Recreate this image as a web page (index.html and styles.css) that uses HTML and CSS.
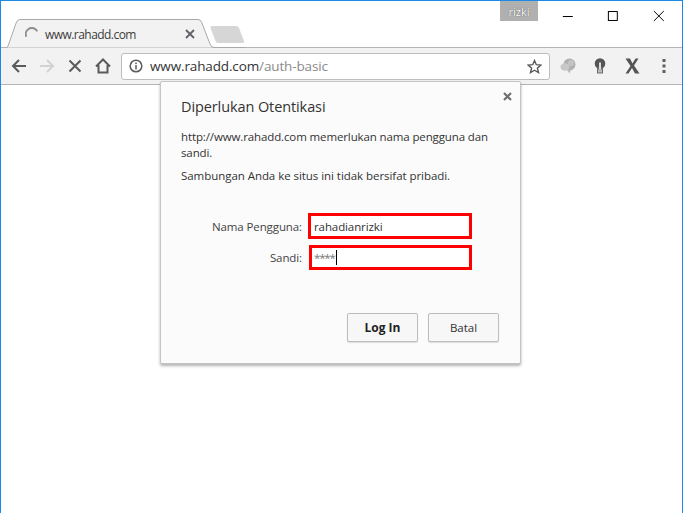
FILE: index.html
```html
<!DOCTYPE html>
<html lang="id">
<head>
<meta charset="utf-8">
<title>www.rahadd.com</title>
<link rel="stylesheet" href="styles.css">
</head>
<body>
<div class="window">
  <header class="titlebar">
    <div class="tab-shape-wrap">
      <svg class="tab-shape" width="240" height="31" viewBox="0 0 240 31">
        <path d="M0 28.500H.5Q1.500 28.500 2 27L10.500 3Q11.500 .5 14 .5H192Q194.500 .5 195.500 3L204 25Q205.500 28.500 208 28.500H240" fill="#f2f2f2" stroke="#a9a9a9" stroke-width="1"/>
        <path d="M204.500 9Q204 7 206 7H230Q232 7 233 9L238 22Q239 24 236 24H212Q210 24 209.500 22Z" fill="#d6d6d6"/>
      </svg>
      <div class="tab">
        <svg class="spinner" width="14" height="14" viewBox="0 0 16 16"><path d="M1.500 11A6.800 6.800 0 0 1 14 5" fill="none" stroke="#8f8f8f" stroke-width="2.200"/></svg>
        <span class="tab-title">www.rahadd.com</span>
        <svg class="tab-close" width="10" height="10" viewBox="0 0 10 10"><path d="M1 1L9 9M9 1L1 9" stroke="#5f6368" stroke-width="1.800"/></svg>
      </div>
    </div>
    <div class="controls">
      <div class="profile">rizki</div>
      <svg class="win-btn" width="46" height="12" viewBox="0 0 46 12"><path d="M18 6.500H28" stroke="#000"/></svg>
      <svg class="win-btn" width="46" height="12" viewBox="0 0 46 12"><rect x="17.500" y="1.500" width="9" height="9" fill="none" stroke="#000"/></svg>
      <svg class="win-btn" width="46" height="12" viewBox="0 0 46 12"><path d="M18 1L28 11M28 1L18 11" stroke="#000"/></svg>
    </div>
  </header>
  <nav class="toolbar">
    <svg class="nav-icon" width="16" height="16" viewBox="0 0 16 16"><path d="M15 8H2M8 2L2 8L8 14" fill="none" stroke="#5a5a5a" stroke-width="2"/></svg>
    <svg class="nav-icon" width="16" height="16" viewBox="0 0 16 16"><path d="M1 8H14M8 2L14 8L8 14" fill="none" stroke="#d2d2d2" stroke-width="2"/></svg>
    <svg class="nav-icon" width="16" height="16" viewBox="0 0 16 16"><path d="M2.500 2.500L13.500 13.500M13.500 2.500L2.500 13.500" stroke="#5a5a5a" stroke-width="2"/></svg>
    <svg class="nav-icon home" width="16" height="16" viewBox="0 0 16 16"><path d="M1 8.500L8 1.500L15 8.500M3.500 7V14.500H12.500V7" fill="none" stroke="#5a5a5a" stroke-width="2"/></svg>
    <div class="omnibox">
      <svg class="info" width="14" height="14" viewBox="0 0 14 14"><circle cx="7" cy="7" r="5.800" fill="none" stroke="#5a5a5a" stroke-width="1.500"/><path d="M7 6V10.500M7 3.500V5" stroke="#5a5a5a" stroke-width="1.500"/></svg>
      <span class="url">www.rahadd.com<span class="url-path">/auth-basic</span></span>
      <svg class="star" width="15" height="15" viewBox="0 0 15 15"><path d="M7.500 1.500L9.300 5.700L13.900 6.100L10.400 9.100L11.500 13.600L7.500 11.200L3.500 13.600L4.600 9.100L1.100 6.100L5.700 5.700Z" fill="none" stroke="#5a5a5a" stroke-width="1.400"/></svg>
    </div>
    <div class="extensions">
      <div class="ext-slot"><svg width="16" height="16" viewBox="0 0 16 16"><circle cx="9.500" cy="6.500" r="6" fill="#b0b0b0"/><circle cx="11" cy="5" r="3" fill="#c4c4c4"/><ellipse cx="5" cy="9" rx="4.500" ry="3.800" fill="#c8c8c8"/><path d="M7 12L9.500 15.500L11 12Z" fill="#bdbdbd"/></svg></div>
      <div class="ext-slot"><svg width="12" height="16" viewBox="0 0 12 16"><circle cx="6" cy="5.500" r="5.300" fill="#555"/><rect x="3" y="9" width="6" height="6.500" fill="#6b6b6b"/><rect x="4" y="11.500" width="4" height="3" fill="#bbb"/><rect x="5" y="4.500" width="2" height="7" fill="#ddd"/></svg></div>
      <div class="ext-slot"><svg width="15" height="16" viewBox="0 0 15 16"><path d="M.5 .5H5L7.500 5.500L10.500 .5H13.500L9 7.500L14.500 15.500H10L7 10L3.500 15.500H.5L5.500 8Z" fill="#555"/></svg></div>
      <div class="ext-slot"><svg width="4" height="16" viewBox="0 0 4 16"><rect x=".5" y="1" width="3" height="3" fill="#5f5f5f"/><rect x=".5" y="6.500" width="3" height="3" fill="#5f5f5f"/><rect x=".5" y="12" width="3" height="3" fill="#5f5f5f"/></svg></div>
    </div>
  </nav>
  <main class="page"></main>
  <section class="dialog">
    <svg class="dialog-close" width="9" height="9" viewBox="0 0 9 9"><path d="M1 1L8 8M8 1L1 8" stroke="#6e6e6e" stroke-width="2.200"/></svg>
    <h1 class="dialog-title">Diperlukan Otentikasi</h1>
    <p class="dialog-text">http://www.rahadd.com memerlukan nama pengguna dan sandi.</p>
    <p class="dialog-text second">Sambungan Anda ke situs ini tidak bersifat pribadi.</p>
    <div class="form">
      <label class="label">Nama Pengguna:</label>
      <div class="field">rahadianrizki</div>
      <label class="label">Sandi:</label>
      <div class="field password"><span class="stars">****</span><span class="caret"></span></div>
    </div>
    <div class="actions">
      <button class="btn primary">Log In</button>
      <button class="btn">Batal</button>
    </div>
  </section>
</div>
</body>
</html>
```
FILE: styles.css
```css
* { box-sizing: border-box; }
html, body { margin: 0; height: 100%; }
body { font-family: "Open Sans", "Noto Sans", sans-serif; font-size: 12px; color: #333; background: #fff; }
.window { position: relative; height: 513px; border: 1px solid #1e88e5; border-bottom: none; display: flex; flex-direction: column; overflow: hidden; background: #fff; }
.titlebar { height: 46px; display: flex; justify-content: space-between; position: relative; flex: none; }
.tab-shape-wrap { position: relative; width: 260px; }
.tab-shape { position: absolute; left: 5px; top: 18px; width: 240px; }
.tab { position: absolute; left: 24px; top: 24px; width: 170px; height: 18px; display: flex; align-items: center; gap: 6px; }
.tab-title { flex: 1; font-size: 12px; color: #3c3c3c; letter-spacing: -.55px; }
.tab-close { flex: none; }
.spinner { flex: none; }
.controls { display: flex; align-items: flex-start; width: 182px; position: relative; }
.profile { position: absolute; left: 0; top: 0; width: 38px; height: 20px; background: #b0b0b0; color: #fff; font-size: 11px; line-height: 21px; text-align: center; text-shadow: 0 0 1px #333; }
.win-btn { margin-top: 9px; }
.controls .win-btn:nth-child(2) { margin-left: 45px; }
.toolbar { height: 38px; flex: none; background: #f2f2f2; border-top: 1px solid #b4b4b4; border-bottom: 1px solid #b4b4b4; display: flex; align-items: center; padding-left: 10px; }
.nav-icon { margin-right: 12px; flex: none; }
.nav-icon.home { margin-right: 10px; }
.omnibox { width: 429px; height: 27px; flex: none; background: #fff; border: 1px solid #bdbdbd; border-radius: 3px; display: flex; align-items: center; padding: 0 7px; gap: 7px; }
.url { flex: 1; font-size: 13.500px; color: #333; letter-spacing: -.13px; }
.url-path { color: #8a8a8a; }
.extensions { display: flex; align-items: center; margin-left: 2px; }
.ext-slot { width: 32px; display: flex; justify-content: center; align-items: center; }
.page { flex: 1; background: #fff; }
.dialog { position: absolute; left: 159px; top: 80px; width: 361px; height: 283px; background: #fbfbfb; border: 1px solid #c4c4c4; border-radius: 2px; box-shadow: 0 2px 3px rgba(0,0,0,.3); padding: 15px 20px; }
.dialog-close { position: absolute; right: 8px; top: 10px; }
.dialog-title { margin: 0 0 12px; font-size: 14.500px; font-weight: 400; color: #333; line-height: 20px; letter-spacing: -.1px; }
.dialog-text { margin: 0; font-size: 11.500px; line-height: 16px; letter-spacing: -.12px; color: #333; }
.dialog-text.second { margin-top: 7px; letter-spacing: -.05px; }
.form { display: grid; grid-template-columns: 121px 164px; column-gap: 6px; row-gap: 6px; margin-top: 29px; align-items: center; }
.label { text-align: right; font-size: 11.500px; letter-spacing: -.1px; color: #444; }
.field { height: 26px; border: 3px solid #f00; background: #fff; padding-left: 3px; font-size: 11.500px; line-height: 19px; color: #333; display: flex; align-items: center; letter-spacing: -.1px; }
.field.password { height: 25px; margin-left: 1px; padding-left: 2px; }
.stars { color: #777; letter-spacing: -1.200px; }
.caret { width: 1px; height: 15px; background: #000; margin-left: 1px; }
.actions { display: flex; justify-content: flex-end; gap: 10px; margin-top: 43px; margin-right: 1px; }
.btn { width: 71px; height: 29px; background: #f7f7f7; border: 1px solid #bdbdbd; border-radius: 2px; box-shadow: 0 1px 1px rgba(0,0,0,.12); font: inherit; font-size: 11.500px; color: #333; padding: 0; }
.btn.primary { font-weight: 700; color: #222; font-size: 12px; }
```
